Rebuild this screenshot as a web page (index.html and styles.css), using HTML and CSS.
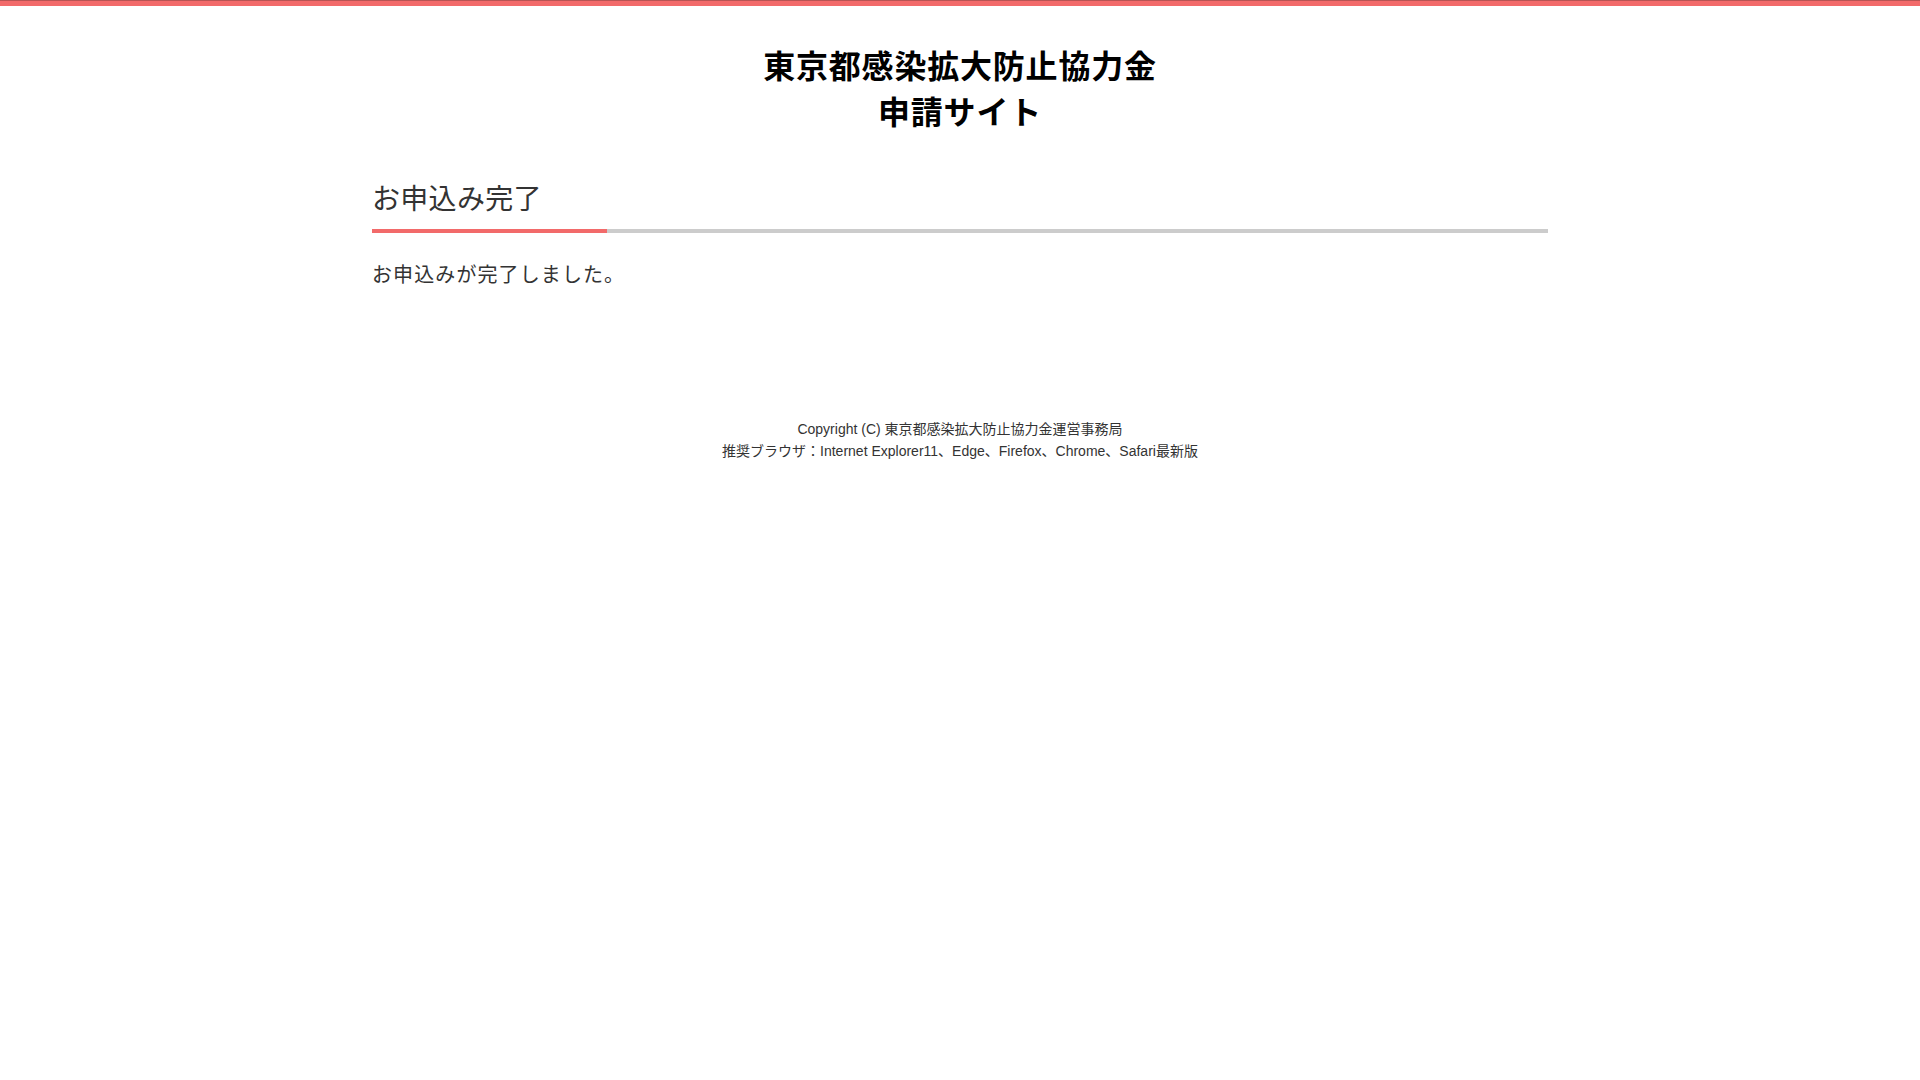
FILE: index.html
```html
<!DOCTYPE html>
<html lang="ja">
<head>
<meta charset="utf-8">
<title>東京都感染拡大防止協力金 申請サイト</title>
<link rel="stylesheet" href="styles.css">
</head>
<body>
<div class="topbar"></div>
<header class="site-header">
  <h1 class="site-title">東京都感染拡大防止協力金<br>申請サイト</h1>
</header>
<main class="container">
  <h2 class="page-heading">お申込み完了</h2>
  <div class="heading-bar"></div>
  <p class="message">お申込みが完了しました。</p>
</main>
<footer class="site-footer">
  <p class="footer-line">Copyright (C) 東京都感染拡大防止協力金運営事務局</p>
  <p class="footer-line">推奨ブラウザ：Internet Explorer11、Edge、Firefox、Chrome、Safari最新版</p>
</footer>
</body>
</html>
```
FILE: styles.css
```css
html, body {
  margin: 0;
  padding: 0;
  background: #ffffff;
}
body {
  font-family: "Liberation Sans", "Noto Sans CJK JP", sans-serif;
  color: #333333;
}
.topbar {
  height: 5px;
  background: #f26a6a;
  border-top: 1px solid #b85454;
}
.site-header {
  padding-top: 35px;
  text-align: center;
}
.site-title {
  margin: 0;
  font-family: "Noto Sans CJK JP", sans-serif;
  font-weight: 700;
  font-size: 32px;
  line-height: 46px;
  letter-spacing: 0.8px;
  color: #000000;
}
.container {
  width: 1176px;
  margin: 0 auto;
  padding-top: 44px;
}
.page-heading {
  margin: 0;
  font-family: "Noto Sans CJK JP", sans-serif;
  font-weight: 400;
  font-size: 28px;
  line-height: 40px;
  letter-spacing: 0.3px;
  color: #333333;
  padding-bottom: 12px;
}
.heading-bar {
  height: 4px;
  background: linear-gradient(to right, #f26a6a 0, #f26a6a 20%, #cccccc 20%, #cccccc 100%);
}
.message {
  margin: 26px 0 0;
  font-family: "Noto Sans CJK JP", sans-serif;
  font-size: 20px;
  line-height: 30px;
  letter-spacing: 1.1px;
  color: #333333;
}
.site-footer {
  margin-top: 129px;
  text-align: center;
}
.footer-line {
  margin: 0;
  font-size: 14px;
  line-height: 22px;
  color: #333333;
}
```
